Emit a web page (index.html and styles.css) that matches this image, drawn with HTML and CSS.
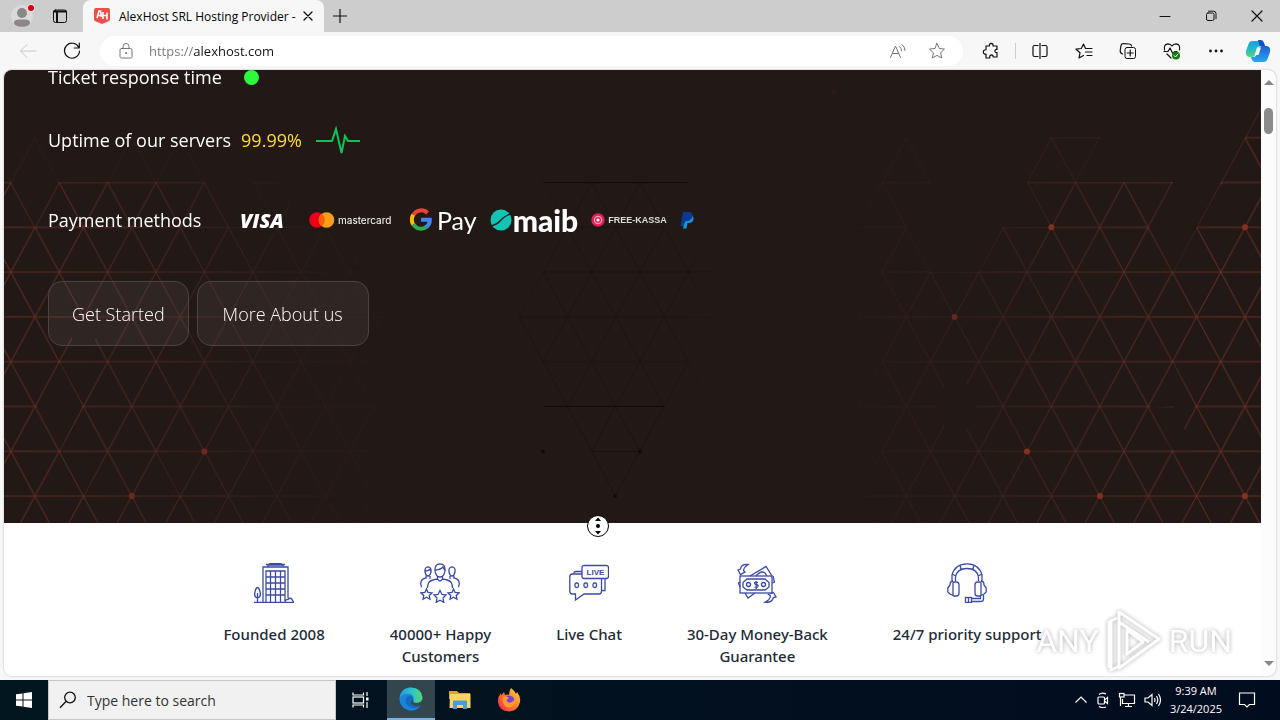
FILE: index.html
```html
<!DOCTYPE html>
<html lang="en">
<head>
<meta charset="utf-8">
<title>AlexHost SRL Hosting Provider</title>
<link rel="stylesheet" href="styles.css">
</head>
<body>
<header class="tabbar">
  <button class="bar-btn profile" aria-label="Profile"><svg width="30" height="30" viewBox="7 1 30 30"><circle cx="22" cy="16" r="11" fill="#dadada"/><circle cx="22" cy="13" r="5" fill="#8c8785"/><path d="M14 22.500c0-2.500 3-3 8-3s8 .5 8 3-3 4.300-8 4.300-8-1.800-8-4.300z" fill="#8c8785"/><circle cx="31" cy="8" r="4" fill="#f3dede"/><circle cx="31" cy="8" r="3" fill="#d8000c"/></svg></button>
  <button class="bar-btn actions" aria-label="Tab actions"><svg class="ink" width="16" height="16" viewBox="0 0 16 16"><rect x="1.500" y="2" width="13" height="12.500" rx="2"/><path d="M2 3.500h12M5 5v9" stroke-width="2"/></svg></button>
  <div class="tab">
    <svg width="16" height="16" viewBox="0 0 16 16"><path d="M0 2Q0 0 2 0h12q2 0 2 2v9q0 2-2 2.500L8 16l-6-2.500Q0 13 0 11z" fill="#ee4f4b"/><path d="M3 10l2-7h1.500l1 6M4 7.500h3.500M9 4v7M13 4.500v7M9 7.500h4" stroke="#fff" stroke-width="1.600" fill="none"/></svg>
    <span class="tab-title">AlexHost SRL Hosting Provider -</span>
    <button class="bar-btn close" aria-label="Close tab"><svg class="ink" width="10" height="10" viewBox="0 0 10 10"><path d="M1 1l8 8M9 1l-8 8" stroke-width="1.300"/></svg></button>
  </div>
  <button class="bar-btn newtab" aria-label="New tab"><svg class="ink" width="14" height="14" viewBox="0 0 14 14"><path d="M7 0v14M0 7h14" stroke-width="1.200"/></svg></button>
  <div class="window-btns">
    <button class="bar-btn" aria-label="Minimize"><svg class="ink" width="12" height="12" viewBox="0 0 12 12"><path d="M1 6.500h10"/></svg></button>
    <button class="bar-btn" aria-label="Restore"><svg class="ink" width="12" height="12" viewBox="0 0 12 12"><rect x="1.500" y="3" width="7.500" height="7.500" rx="1.500"/><path d="M3.500 1.200h5q2.500 0 2.500 2.500v5"/></svg></button>
    <button class="bar-btn" aria-label="Close"><svg class="ink" width="12" height="12" viewBox="0 0 12 12"><path d="M1 1l10 10M11 1L1 11" stroke-width="1.200"/></svg></button>
  </div>
</header>

<nav class="toolbar">
  <button class="bar-btn" aria-label="Back"><svg class="ink pale" width="18" height="16" viewBox="0 0 18 16"><path d="M17 8H2M8 1.500L1.500 8 8 14.500"/></svg></button>
  <button class="bar-btn" aria-label="Refresh"><svg class="ink" width="18" height="18" viewBox="0 0 18 18"><path d="M15.800 5.500A7.500 7.500 0 1 0 16.500 9M16.300 1v5h-5" stroke-width="1.200"/></svg></button>
  <div class="address">
    <svg class="ink gray" width="14" height="16" viewBox="0 0 14 16"><rect x="1" y="5.500" width="12" height="9.500" rx="1.500"/><path d="M4 5V3.500a3 3 0 0 1 6 0V5"/><circle cx="7" cy="10" r=".6"/></svg>
    <input class="url" type="text" aria-label="Address" value="https://alexhost.com">
    <button class="bar-btn" aria-label="Read aloud"><svg class="ink gray" width="18" height="16" viewBox="0 0 18 16"><path d="M2.500 14.500L7.500 3l5 11.500M4.500 10.500h6M11.500 3.500q2 1.500 2 4M14 1.500q3 2 3 6"/></svg></button>
    <button class="bar-btn" aria-label="Favorite"><svg class="ink gray" width="18" height="18" viewBox="0 0 18 18"><path d="M9 1.500l2.300 5 5.200.6-3.900 3.600 1.100 5.300L9 13.400 4.300 16l1.100-5.300L1.500 7.100l5.200-.6z"/></svg></button>
  </div>
  <div class="tools">
    <button class="bar-btn" aria-label="Extensions"><svg class="ink" width="18" height="18" viewBox="0 0 18 18"><path d="M4 4h3.500q-.5-2.500 1.800-2.700 2.200.2 1.700 2.700H15v3.500q-2-.4-2.200 1.500.2 2 2.200 1.500V15h-3.800q.2-2-1.800-2.200-1.700.2-1.700 2.200v1H4v-4q-2.500.3-2.700-2Q1.500 7.500 4 7.800z" stroke-width="1.200"/></svg></button>
    <span class="sep"></span>
    <button class="bar-btn" aria-label="Split screen"><svg class="ink" width="16" height="16" viewBox="0 0 16 16"><path d="M6 2.500H2.500Q1 2.500 1 4v8q0 1.500 1.500 1.500H6M8 0v16M10 2.500h3.500Q15 2.500 15 4v8q0 1.500-1.500 1.500H10" stroke-width="1.200"/></svg></button>
    <button class="bar-btn" aria-label="Favorites list"><svg class="ink" width="18" height="16" viewBox="0 0 18 16"><path d="M10.500 5.500L8.500 1 6.300 5.500 1 6.200l4 3.600L4 15l4.500-2.500M10.500 5.500H17M10.500 9H17M12 12.500h5" stroke-width="1.200"/></svg></button>
    <button class="bar-btn" aria-label="Collections"><svg class="ink" width="18" height="18" viewBox="0 0 18 18"><rect x="6" y="5.500" width="10.500" height="11" rx="2"/><path d="M11.200 8v6M8.200 11h6M3.500 12Q1 11 1.200 8.500L2 3.500Q2.500 1.500 4.500 1.600l6 .4q2 .2 2 2" stroke-width="1.200"/></svg></button>
    <button class="bar-btn" aria-label="Browser essentials"><svg class="ink" width="18" height="18" viewBox="0 0 18 18"><path d="M1.500 8Q.5 2 5 1.800 7.500 2 9 4q1.500-2 4-2.200Q17.500 2 16.500 8M1 9.500h4l2-3.500 3 6 1.500-2.500H14M4 12l4 4" stroke-width="1.200"/><circle cx="13" cy="13.500" r="4" fill="#117a13" stroke="none"/><path d="M11 13.500l1.500 1.500 2.500-3" stroke="#fff"/></svg></button>
    <button class="bar-btn" aria-label="More"><svg width="16" height="16" viewBox="0 0 16 16" fill="#111"><circle cx="2.500" cy="8" r="1.400"/><circle cx="8" cy="8" r="1.400"/><circle cx="13.500" cy="8" r="1.400"/></svg></button>
    <button class="bar-btn copilot" aria-label="Copilot"><svg width="26" height="24" viewBox="0 0 26 24"><defs><linearGradient id="co1" x1="0" y1="0" x2="0" y2="1"><stop offset="0" stop-color="#1aa0e8"/><stop offset=".5" stop-color="#22b9c4"/><stop offset="1" stop-color="#58d67c"/></linearGradient><linearGradient id="co2" x1="0" y1="0" x2="0" y2="1"><stop offset="0" stop-color="#1b5fd0"/><stop offset="1" stop-color="#2aa8f5"/></linearGradient></defs><path d="M7.500 2h9q2.500.5 3.500 5h-4q-3 0-4 3l-1.500 5q-1 3-4 3H4q-4-1-3-6L3.500 5Q4.500 2 7.500 2z" fill="url(#co1)"/><path d="M13 1h3q2 0 3 3l1 3h-5.500z" fill="#1450b8"/><path d="M18.500 23h-9Q7 22.500 6 18h2.500q2.500 0 3.500-3l1.500-5q1-3 4-3H22q4 1 3 6l-2.500 7q-1 3-4 3z" fill="url(#co2)"/><path d="M12 8.500h4L13.500 16h-4z" fill="#f7f7f7"/></svg></button>
  </div>
</nav>

<div class="frame">
  <main class="page">
    <section class="hero">
      <svg class="lattice" viewBox="4 70 1257 453" preserveAspectRatio="xMinYMin slice" aria-hidden="true">
        <defs>
          <pattern id="red" patternUnits="userSpaceOnUse" x="10.800" y="182.500" width="48.400" height="89.600"><path d="M0 0H48.400M0 44.800H48.400M0 89.600H48.400M0 0L48.400 89.600M48.400 0L0 89.600" stroke="#7c3529" stroke-width="1" fill="none"/></pattern>
          <pattern id="dark" patternUnits="userSpaceOnUse" x="10.800" y="182.500" width="48.400" height="89.600"><path d="M0 0H48.400M0 44.800H48.400M0 89.600H48.400M0 0L48.400 89.600M48.400 0L0 89.600" stroke="#0c0807" stroke-width="1" fill="none"/></pattern>
          <linearGradient id="fl"><stop offset="0" stop-color="#fff" stop-opacity=".75"/><stop offset=".45" stop-color="#fff" stop-opacity=".4"/><stop offset=".7" stop-color="#fff" stop-opacity=".12"/><stop offset="1" stop-color="#fff" stop-opacity="0"/></linearGradient>
          <linearGradient id="fr"><stop offset="0" stop-color="#fff" stop-opacity="0"/><stop offset=".35" stop-color="#fff" stop-opacity=".25"/><stop offset=".65" stop-color="#fff" stop-opacity=".55"/><stop offset="1" stop-color="#fff" stop-opacity=".8"/></linearGradient>
          <mask id="ml"><rect x="4" y="70" width="430" height="453" fill="url(#fl)"/></mask>
          <mask id="mr"><rect x="800" y="70" width="461" height="453" fill="url(#fr)"/></mask>
        </defs>
        <g mask="url(#ml)">
          <path fill="url(#red)" d="M4 182H11L35 227 59 182H205L229 227H277L253 182 277 182 302 227H434V523H4z"/>
          <path fill="url(#red)" opacity=".25" d="M4 182L35 137 59 182zM108 182L132 137 156 182 180 137 205 182zM277 182L302 137 326 182z"/>
        </g>
        <path fill="#221917" d="M60 363L82 405 60 450 37 406zM61 453H106L84 495zM12 363H57L35 404zM157 453H203L180 495zM61 318H106L84 360z"/>
        <g mask="url(#mr)">
          <path fill="url(#red)" d="M1261 108L1197 227 1173 272 1149 227 1173 182H1027L1051 227H1003L979 272H930L906 227 930 182 906 137 858 227 882 272 858 317 882 361 858 406 882 451 858 496 872 523H1261z"/>
          <path fill="url(#red)" opacity=".5" d="M1027 182L1051 137H1100L1076 182z"/>
          <g fill="#b0402a"><circle cx="834" cy="92" r="3"/></g>
        </g>
        <path fill="#221917" d="M1150 408L1173 363 1195 406 1172 450zM957 362L977 406 957 450 935 406zM1029 453H1074L1098 495H1053L1076 453zM1247 184L1243 225 1200 225 1222 184zM1151 408L1171 450H1195L1173 406z"/>
        <g fill="#84321f"><circle cx="1051.400" cy="227.300" r="3"/><circle cx="1245" cy="227.300" r="3"/><circle cx="1027" cy="451.500" r="3"/><circle cx="1100" cy="496" r="3"/><circle cx="1245" cy="496" r="3"/><circle cx="954.600" cy="317" r="3" opacity=".6"/></g>
        <g fill="#6b2a1c"><circle cx="204.400" cy="451.500" r="3"/><circle cx="131.800" cy="496" r="3"/></g>
        <path fill="url(#dark)" opacity=".4" d="M543 182H688L664 227 712 272H700L688 317H712L688 361 712 406H522L543 361H512L519 317 543 272 567 227z"/>
        <g fill="#120c0b"><circle cx="543" cy="451.500" r="2"/><circle cx="640" cy="451.500" r="2"/><circle cx="615" cy="496" r="2"/></g>
        <path stroke="#120c0b" fill="none" d="M543 182.500H688M543 406.500H664"/>
        <path stroke="#120c0b" fill="none" opacity=".5" d="M592 451.500H640M592 451L615 496 640 451M567 406L592 451 615 406 640 451 664 406"/>
      </svg>
      <div class="stats">
        <div class="stat">Ticket response time <span class="dot"></span></div>
        <div class="stat">Uptime of our servers <span class="pct">99.99%</span>
          <svg class="pulse" width="44" height="28" viewBox="0 0 44 28"><path d="M0 15H16L20 3 25.500 27 29 10l3 5H44" fill="none" stroke="#12c257" stroke-width="2"/></svg></div>
        <div class="stat pay"><span class="pay-label">Payment methods</span>
          <span class="visa">VISA</span>
          <span class="brand mastercard"><svg width="26" height="16" viewBox="0 0 26 16"><circle cx="8" cy="8" r="7.800" fill="#eb001b"/><circle cx="17.500" cy="8" r="7.800" fill="#f79e1b"/><path d="M12.750 1.800a7.800 7.800 0 0 1 0 12.400 7.800 7.800 0 0 1 0-12.400z" fill="#ff5f00"/></svg>mastercard</span>
          <span class="brand gpay"><svg width="22" height="24" viewBox="0 0 22 24" fill="none" stroke-width="4"><path d="M3.300 7A9 9 0 0 1 17.500 5" stroke="#ea4335"/><path d="M3.300 16.500A9.200 9.200 0 0 1 3.300 6.800" stroke="#fbbc04"/><path d="M3.300 16.300A9 9 0 0 0 17 18.500" stroke="#34a853"/><path d="M11 11.700h8.800Q20 16 16.500 19" stroke="#4285f4"/></svg>Pay</span>
          <span class="brand maib"><svg width="22" height="22" viewBox="0 0 22 22"><circle cx="11" cy="11" r="10.500" fill="#12c4b4"/><path d="M0 16.500Q7 14.500 10 11T20.500 4L21.500 5.500Q15 7 11.500 11.500T.5 18z" fill="#221917"/></svg>maib</span>
          <span class="brand kassa"><svg width="14" height="14" viewBox="0 0 14 14"><circle cx="7" cy="7" r="5.500" fill="#f3a0b8" stroke="#e01f56" stroke-width="2.500"/><circle cx="7" cy="7" r="3" fill="#e01f56"/><circle cx="7" cy="7" r="1.600" fill="#fff"/></svg>FREE-KASSA</span>
          <svg class="paypal" width="14" height="18" viewBox="0 0 14 18"><path d="M3 1h6.500Q13 1.500 12.500 5.500 11.500 10 7 10H5l-1 5H.5z" fill="#0a3a94"/><path d="M12.500 5q1.500 1 1 3.500Q12.500 12 9 12H7.500l-1 5.500H3L4 13l1.500-3q6 .5 7-5z" fill="#1593dc"/></svg>
        </div>
      </div>
      <div class="cta">
        <button class="cta-btn">Get Started</button>
        <button class="cta-btn wide">More About us</button>
      </div>
    </section>
    <section class="features">
      <div class="feature"><svg width="40" height="40" viewBox="0 0 40 40"><path d="M0 39.300H40M9 39V4H34V35M12 1.500H16V.7H27V1.500H31M14 4V2H29V4M12 39V8H31V39M12 14H31M12 20H31M12 26H31M12 32H31M16.500 8V39M21.500 8V39M26.500 8V39M3.500 39V30M3.500 35Q0 34 .8 30 1.500 25 3.500 24.500 5.500 25 6.200 30 7 34 3.500 35M31 38.500Q32 36 34 36.500 36 34 38 36.500L39.500 39"/></svg><h3>Founded 2008</h3></div>
      <div class="feature"><svg width="40" height="40" viewBox="0 0 40 40"><path d="M15 8Q14.500 1 20 .8 25.500 1 25 8 24 14 20 14 16 14 15 8zM15 7Q20 7 23 4L25 8M17.500 13.500V16Q20 20 22.500 16V13.500M17.500 16Q10 17 8.500 20 7.500 22 7.500 25M22.500 16Q30 17 31.500 20 32.500 22 32.500 25M5 9Q4.500 4 8 3.800 11.500 4 11 9 10 13 8 13 6 13 5 9zM5 8Q8 8 9.500 6.500L11 8M29 9Q28.500 4 32 3.800 35.500 4 35 9 34 13 32 13 30 13 29 9zM6 12.500V15Q1 16 .8 20 .5 23 2 24M10 13V16M30 13V16M34 12.500V15Q39 16 39.200 20 39.500 23 38 24M20 27.500l2 4 4 .5-3 3 .8 4.300L20 37.200l-3.800 2.100L17 35l-3-3 4-.5zM6.500 26l1.500 3.500 4 .4-2.800 2.500.8 3.800-3.500-1.900L3 36.200l.8-3.800L1 29.900l4-.4zM33.500 26l1.500 3.500 4 .4-2.800 2.500.8 3.800-3.500-1.900L30 36.200l.8-3.800L28 29.900l4-.4z"/></svg><h3>40000+ Happy<br>Customers</h3></div>
      <div class="feature"><svg width="40" height="40" viewBox="0 0 40 40"><rect x="13" y="2.500" width="26.500" height="13" rx="2"/><path d="M13 11H3.500Q.8 11 .8 14V28Q.8 31 3.500 31H6.500V37L15 31H30Q32.500 31 32.500 28V16M5 11V10Q5 8.500 6.500 8.500H13M36 16V27.500H32.500"/><rect x="6" y="20" width="3.500" height="4.500" rx="1.500"/><rect x="15" y="20" width="3.500" height="4.500" rx="1.500"/><rect x="24" y="20" width="3.500" height="4.500" rx="1.500"/><text x="26.500" y="12" class="live">LIVE</text></svg><h3>Live Chat</h3></div>
      <div class="feature"><svg width="40" height="40" viewBox="0 0 40 40"><rect x="3" y="13" width="32" height="17"/><path d="M10 16H28L32 19.500V24L28 27H10L6 24V19.500zM13 13L29 3.500 35 13M19 13Q24 7 28 10L30 13M36 13L37.500 19 35 20M3 19L1.500 20 3 24M8 30L11 35 18 30M11 1.500Q4 1 3.500 6L1 7 3.500 11.500 8 9 6.500 7.500Q7 4 11 1.500zM28 39.200Q35 40 36.500 34.500L39 34 36.500 29.500 31.500 31.500 33.500 33Q33 37 28 39.200z"/><circle cx="11.500" cy="21.500" r="2"/><circle cx="26.500" cy="21.500" r="2"/><path d="M21 19.500Q17 18.500 17.500 20.500 18 21.500 19.500 21.500 21.500 22 21 23.500 20 25 17.500 24M19.200 18V26"/></svg><h3>30-Day Money-Back<br>Guarantee</h3></div>
      <div class="feature"><svg width="40" height="40" viewBox="0 0 40 40"><path d="M5 18V12Q8 .8 20 .8T35 12V18M8.500 18V14Q10 5.500 20 5.500T31.500 14V18M5 11L9 13M35 11L31 13M13 1.500L14 6.500M27 1.500L26 6.500M7 19H9.500Q12 19 12 22V30Q12 33 9.500 33H7Q6 33 6 32V20Q6 19 7 19zM33 19H30.500Q28 19 28 22V30Q28 33 30.500 33H33Q34 33 34 32V20Q34 19 33 19zM6 18Q3 18 3 22L.8 25V29L3 31 6 32.500M34 18Q37 18 37 22L39.200 25V29L37 31 34 32.500M33.500 33V35.500H25M36.500 32V36Q36.500 38.500 33.500 38.500H25"/><rect x="18.500" y="34.500" width="6" height="5"/><path d="M21.500 34.500V39.500"/></svg><h3>24/7 priority support</h3></div>
    </section>
    <svg class="scroll-cursor" width="22" height="22" viewBox="0 0 22 22"><circle cx="11" cy="11" r="10.500" fill="#fff" stroke="#000"/><circle cx="11" cy="11" r="2"/><path d="M8 6l3-3.500L14 6zM8 16l3 3.500 3-3.500z"/></svg>
  </main>
  <div class="scrollbar" aria-hidden="true"><span class="arrow up"></span><span class="thumb"></span><span class="arrow down"></span></div>
  <div class="watermark" aria-hidden="true">
    <span>ANY</span>
    <svg width="58" height="66" viewBox="0 0 58 66"><path d="M14 4L54 31 14 60 14 4zM14 14L44 34M6 12V62L14 58M12 10L4 14V60M22 22V46L38 34z" fill="none" stroke="#fff" stroke-width="3" stroke-linejoin="round"/></svg>
    <span>RUN</span>
  </div>
</div>

<footer class="taskbar">
  <button class="task start" aria-label="Start"><svg width="16" height="16" viewBox="0 0 16 16" fill="#fff"><path d="M0 2.300L6.500 1.400V7.500H0zM7.500 1.200L16 0V7.500H7.500zM0 8.500H6.500V14.600L0 13.700zM7.500 8.500H16V16L7.500 14.800z"/></svg></button>
  <label class="search"><svg width="18" height="18" viewBox="0 0 18 18" fill="none" stroke="#111" stroke-width="1.300"><circle cx="11" cy="6.500" r="5.300"/><path d="M7.200 10.300L1 16.800"/></svg><input type="text" placeholder="Type here to search" aria-label="Type here to search"></label>
  <button class="task view" aria-label="Task view"><svg width="18" height="16" viewBox="0 0 18 16" fill="none" stroke="#fff" stroke-width="1.200"><path d="M1 .5V3H11.500V.5M1 15.500V13H11.500V15.500"/><rect x="1" y="5" width="10.500" height="6"/><path d="M15 0V4M15 10V16"/><rect x="14" y="5.500" width="2.500" height="3" fill="#fff" stroke="none"/></svg></button>
  <button class="task active" aria-label="Edge"><svg width="24" height="24" viewBox="0 0 24 24"><defs><linearGradient id="e1"><stop offset="0" stop-color="#1e9de0"/><stop offset=".6" stop-color="#2fc7c4"/><stop offset="1" stop-color="#5bd86a"/></linearGradient></defs><circle cx="12" cy="12" r="11.500" fill="#1669c1"/><path d="M.5 12Q1 1 12 .5 22.500 1 23.500 10.500 23.500 16 17.500 16 13 16 14.500 12.500 15 7.500 9.500 7 3 7 .5 12z" fill="url(#e1)"/><path d="M9 9Q4 14 9 19 14 23 21 19.500 16 25 9 23 1 20 .5 12 3 7 9.500 7 14.500 8 14.500 12 12 8 9 9z" fill="#1c84d6"/><path d="M14.500 12.500Q13 16 17.500 16 22 16 23.400 12 24 17 21 19 15 20 12.500 17 11 14 14.500 12.500z" fill="#354b55"/></svg></button>
  <button class="task" aria-label="File Explorer"><svg width="22" height="20" viewBox="0 0 22 20"><path d="M0 1H8L10 3H21V9H0z" fill="#e3a21c"/><path d="M1 4H21.500V18H.5z" fill="#fbd462"/><path d="M4 19V11.500Q4 10.500 5 10.500H17Q18 10.500 18 11.500V19H14V15H8V19z" fill="#4b9bd8"/></svg></button>
  <button class="task" aria-label="Firefox"><svg width="24" height="24" viewBox="0 0 24 24"><defs><linearGradient id="ff" x1="0" y1="1" x2="1" y2="0"><stop offset="0" stop-color="#f5215c"/><stop offset=".5" stop-color="#ff7a22"/><stop offset="1" stop-color="#ffe14a"/></linearGradient></defs><path d="M14 0Q18 3 19 6L20 4Q24 9 23 14 21 23 12 23.500 2 23 1 14 .5 9 4 5L4.500 7.500 7 4 8 7Q11 6 12 7 12 3 14 0z" fill="url(#ff)"/><circle cx="12" cy="13" r="5.500" fill="#7b3fd4"/><path d="M6 9Q9 7 12 10L9.500 12Q10 15 14 14.500 18 13 17 9.500 20 14 17 17.500 13 21 8.500 18.500 4.500 15 6 9z" fill="#ff9a2b"/></svg></button>
  <div class="tray">
    <svg width="14" height="16" viewBox="0 0 14 16"><path d="M1.500 10.500L7 5l5.500 5.500"/></svg>
    <svg width="14" height="16" viewBox="0 0 14 16"><rect x="2" y="5" width="6.500" height="7" rx="1"/><path d="M8.500 8l3-2.500V11.500l-3-2.500M3 2.500Q6 0 10 2M3 14.500Q6 16.500 10 15"/></svg>
    <svg width="18" height="16" viewBox="0 0 18 16"><path d="M6 3H16.500V11.500H4.500V7M10.500 11.500V14.500M7 14.500H14"/><rect x="1.500" y="1.500" width="4.500" height="3.500"/><path d="M2.500 5V14"/></svg>
    <svg width="18" height="16" viewBox="0 0 18 16"><path d="M1 6H4L8 2.500V13.500L4 10H1zM10.500 6Q11.500 8 10.500 10M12.500 4Q15 8 12.500 12M14.500 2Q18.500 8 14.500 14"/></svg>
    <div class="clock">9:39 AM<br>3/24/2025</div>
    <svg class="notice" width="18" height="18" viewBox="0 0 18 18"><path d="M1.500 2H16.500V13.500H11.500L9 16 6.500 13.500H1.500z"/></svg>
  </div>
</footer>
</body>
</html>
```
FILE: styles.css
```css
* { box-sizing: border-box; }

body {
  margin: 0;
  min-height: 100vh;
  display: flex;
  flex-direction: column;
  background: #f7f7f7;
  color: #000;
  font-family: "Open Sans", "Noto Sans", sans-serif;
  font-size: 12px;
}

button, input { font: inherit; color: inherit; }
svg { flex: none; display: block; }

.bar-btn {
  display: flex;
  align-items: center;
  justify-content: center;
  padding: 0;
  border: 0;
  background: none;
}

.ink { fill: none; stroke: #111; stroke-width: 1; stroke-linecap: round; stroke-linejoin: round; }
.ink.pale { stroke: #c8c8c8; }
.ink.gray { stroke: #767676; }

.tabbar {
  display: flex;
  height: 32px;
  background: #cdcdcd;
}
.profile { margin-left: 7px; width: 30px; }
.actions { width: 46px; }
.tab {
  display: flex;
  align-items: center;
  justify-content: space-between;
  width: 241px;
  padding: 0 11px;
  background: #f7f7f7;
  border-radius: 8px 8px 0 0;
}
.tab-title { flex: 1; margin-left: 9px; white-space: nowrap; }
.newtab { width: 32px; }
.window-btns { display: flex; margin-left: auto; }
.window-btns .bar-btn { width: 46px; }

.toolbar {
  display: flex;
  align-items: center;
  height: 38px;
  padding: 0 9px 0 19px;
  gap: 26px;
}
.address {
  flex: 1;
  display: flex;
  align-items: center;
  gap: 16px;
  height: 30px;
  margin-left: -7px;
  padding: 0 14px 0 19px;
  border-radius: 15px;
  background: #fff;
}
.url {
  flex: 1;
  min-width: 0;
  padding: 0;
  border: 0;
  outline: 0;
  font-size: 13px;
  color: transparent;
  background: linear-gradient(to right, #767676 44px, #111 44px);
  -webkit-background-clip: text;
  background-clip: text;
}
.address .bar-btn { width: 24px; }
.tools { display: flex; align-items: center; gap: 26px; margin-left: -7px; }
.tools .bar-btn { width: 18px; }
.sep { width: 1px; height: 16px; margin: 0 -11px; background: #ccc; }
.tools .copilot { width: 26px; margin-left: -6px; }

.frame {
  position: relative;
  flex: 1;
  display: flex;
  margin: 0 4px 4px;
  border-radius: 8px;
  background: #fcfcfc;
  box-shadow: 0 0 2px #aaa;
  overflow: hidden;
}
.page { position: relative; flex: 1; min-width: 0; background: #fff; }
.scrollbar {
  display: flex;
  flex-direction: column;
  align-items: center;
  width: 15px;
  padding: 10px 0;
}
.arrow { border: 5px solid transparent; }
.up { border-top: 0; border-bottom-color: #868686; }
.down { border-bottom: 0; border-top-color: #868686; margin-top: auto; }
.thumb { width: 9px; height: 26px; margin-top: 23px; border-radius: 5px; background: #8b8b8b; }

.hero {
  position: relative;
  height: 453px;
  padding: 0 44px;
  background: #221917;
  color: #fff;
  overflow: hidden;
}
.lattice { position: absolute; inset: 0; width: 100%; height: 100%; }
.stats { position: relative; display: flex; flex-direction: column; margin-top: -7px; gap: 35px; }
.stat { display: flex; align-items: center; height: 28px; gap: 10px; font-size: 18px; }
.dot { width: 15px; height: 15px; margin-left: 12px; border-radius: 50%; background: #2cfa3c; }
.pct { color: #fddb3a; }
.pulse { margin-left: 4px; }
.pay { margin-top: 17px; gap: 13px; }
.pay-label { width: 179px; }
.visa { width: 56px; font-size: 20px; font-weight: 800; font-style: italic; }
.brand { display: flex; align-items: center; }
.mastercard { width: 88px; gap: 3px; font-family: Inter, sans-serif; font-size: 10px; }
.gpay { gap: 5px; font-family: Lato, sans-serif; font-size: 25px; }
.maib { gap: 1px; font-family: Lato, sans-serif; font-size: 30px; font-weight: 900; }
.kassa { gap: 3px; font-family: "Liberation Sans", sans-serif; font-size: 9px; font-weight: 700; color: #ddd; }

.cta { position: relative; display: flex; gap: 8px; margin-top: 47px; }
.cta-btn {
  height: 65px;
  padding: 0 23px;
  border: 1px solid #4b4443;
  border-radius: 14px;
  background: rgba(255, 255, 255, .06);
  font-size: 18px;
  font-weight: 300;
}
.cta-btn.wide { padding: 0 25px; }

.features { display: flex; justify-content: center; gap: 65px; padding-top: 40px; }
.feature { display: flex; flex-direction: column; align-items: center; gap: 20px; }
.feature svg { fill: none; stroke: #3b4ba3; stroke-width: 1.300; }
.feature .live {
  fill: #3b4ba3;
  stroke: none;
  font: 700 8px "Liberation Sans", sans-serif;
  text-anchor: middle;
}
.feature h3 {
  margin: 0;
  color: #212b36;
  font-family: "Noto Sans", "Open Sans", sans-serif;
  font-size: 15px;
  font-weight: 500;
  line-height: 22px;
  text-align: center;
  white-space: nowrap;
}
.scroll-cursor { position: absolute; left: 583px; top: 445px; }

.watermark {
  position: absolute;
  right: 44px;
  bottom: 2px;
  display: flex;
  align-items: center;
  gap: 6px;
  color: #fff;
  font-family: Roboto, "Liberation Sans", sans-serif;
  font-size: 32px;
  filter: drop-shadow(0 0 2px #aaa);
}

.taskbar { display: flex; height: 40px; background: linear-gradient(to right, #02161f, #020c1f); }
.task {
  display: flex;
  align-items: center;
  justify-content: center;
  width: 49px;
  padding: 0;
  border: 0;
  background: none;
}
.start { width: 48px; }
.view { width: 51px; padding-right: 2px; }
.task.active { width: 48px; background: #33454d; border-bottom: 2px solid #76b4e8; }
.search {
  display: flex;
  align-items: center;
  gap: 10px;
  width: 288px;
  padding-left: 10px;
  border: 1px solid #c6c6c6;
  background: #f1f1f1;
  font-size: 14px;
}
.search input { flex: 1; min-width: 0; padding: 0; border: 0; outline: 0; background: none; }
.search input::placeholder { color: #333; opacity: 1; }
.tray { display: flex; align-items: center; gap: 8px; margin-left: auto; padding-right: 24px; color: #fff; }
.tray svg { fill: none; stroke: #fff; stroke-width: 1.200; }
.clock { font-size: 11px; line-height: 18px; text-align: center; }
.notice { margin-left: 8px; }
```
